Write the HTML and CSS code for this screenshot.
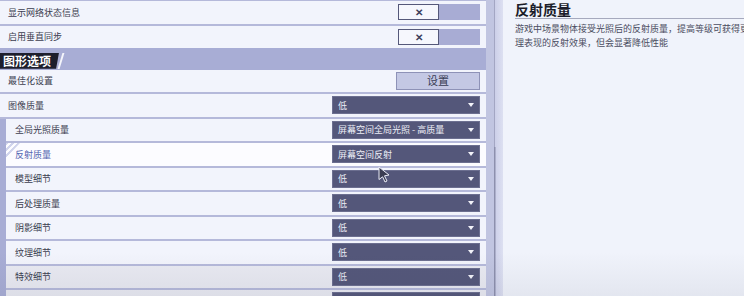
FILE: index.html
```html
<!DOCTYPE html>
<html lang="zh-CN">
<head>
<meta charset="utf-8">
<title>图形选项</title>
<link rel="stylesheet" href="styles.css">
</head>
<body>
<div class="page">
  <div class="left">
    <div class="row">
      <span class="label">显示网络状态信息</span>
      <div class="toggle"><span class="tog-off">✕</span><span class="tog-on"></span></div>
    </div>
    <div class="row">
      <span class="label">启用垂直同步</span>
      <div class="toggle"><span class="tog-off">✕</span><span class="tog-on"></span></div>
    </div>
    <div class="header">
      <div class="tab">图形选项</div>
      <div class="slash"></div>
    </div>
    <div class="row">
      <span class="label">最佳化设置</span>
      <div class="btn">设置</div>
    </div>
    <div class="row">
      <span class="label">图像质量</span>
      <div class="select"><span>低</span><i class="arrow"></i></div>
    </div>
    <div class="group">
      <div class="row sub">
        <span class="label">全局光照质量</span>
        <div class="select"><span>屏幕空间全局光照 - 高质量</span><i class="arrow"></i></div>
      </div>
      <div class="row sub active">
        <span class="label">反射质量</span>
        <div class="select"><span>屏幕空间反射</span><i class="arrow"></i></div>
      </div>
      <div class="row sub">
        <span class="label">模型细节</span>
        <div class="select"><span>低</span><i class="arrow"></i></div>
      </div>
      <div class="row sub">
        <span class="label">后处理质量</span>
        <div class="select"><span>低</span><i class="arrow"></i></div>
      </div>
      <div class="row sub">
        <span class="label">阴影细节</span>
        <div class="select"><span>低</span><i class="arrow"></i></div>
      </div>
      <div class="row sub">
        <span class="label">纹理细节</span>
        <div class="select"><span>低</span><i class="arrow"></i></div>
      </div>
      <div class="row sub dim">
        <span class="label">特效细节</span>
        <div class="select"><span>低</span><i class="arrow"></i></div>
      </div>
      <div class="row sub dim">
        <span class="label"></span>
        <div class="select"></div>
      </div>
    </div>
  </div>
  <div class="scroll"></div>
  <div class="right">
    <h1 class="title">反射质量</h1>
    <p class="desc">游戏中场景物体接受光照后的反射质量，提高等级可获得更好的物<br>理表现的反射效果，但会显著降低性能</p>
  </div>
  <svg class="cursor" width="14" height="18" viewBox="0 0 14 18">
    <path d="M2 1 L12 9 L7.5 9.8 L10 15 L8 16 L5.6 10.8 L2 13.5 Z" fill="#3a3c52" stroke="#e9ebf6" stroke-width="1"/>
  </svg>
  <div class="shade"></div>
</div>
</body>
</html>
```

FILE: styles.css
```css
* { box-sizing: border-box; }
html, body {
  margin: 0;
  padding: 0;
  width: 744px;
  height: 296px;
  overflow: hidden;
  background: #eff2fb;
  font-family: "Noto Sans CJK SC", "Noto Sans", sans-serif;
}
.page {
  position: relative;
  display: flex;
  width: 744px;
  height: 296px;
  overflow: hidden;
}
.left {
  width: 486px;
  flex: none;
  display: flex;
  flex-direction: column;
  gap: 2px;
  padding-top: 1px;
  background: #b5b9da;
}
.row {
  position: relative;
  flex: none;
  height: 22.5px;
  display: flex;
  align-items: center;
  justify-content: space-between;
  padding: 0 6px 0 8px;
  background: #f2f4fc;
}
.label {
  font-size: 9px;
  line-height: 1;
  color: #3b3d4f;
}
.group {
  display: flex;
  flex-direction: column;
  gap: 2px;
  border-left: 6px solid #a8add5;
}
.row.sub { padding-left: 9px; }
.row.active { background: #fcfcff; }
.row.active .label { color: #5264b0; }
.row.active::before {
  content: "";
  position: absolute;
  left: 0;
  top: 0;
  width: 14px;
  height: 15px;
  background: repeating-linear-gradient(135deg, #d0d4ec 0 2px, transparent 2px 4px);
  clip-path: polygon(0 0, 100% 0, 0 100%);
}
.row.dim { background: #e9eaf2; }

.toggle {
  display: flex;
  width: 82px;
  height: 16px;
}
.tog-off {
  width: 41px;
  height: 16px;
  background: #f6f7fd;
  border: 1px solid #55587a;
  display: flex;
  align-items: center;
  justify-content: center;
  font-size: 10px;
  font-weight: bold;
  color: #3c3f5c;
  line-height: 1;
}
.tog-on {
  width: 41px;
  height: 16px;
  background: #a8acd4;
}
.btn {
  width: 84px;
  height: 18px;
  background: #c4c8e4;
  border: 1px solid #8e92b7;
  display: flex;
  align-items: center;
  justify-content: center;
  font-size: 11px;
  color: #3a3d55;
  line-height: 1;
}
.select {
  width: 148px;
  height: 18px;
  background: #54577a;
  border: 1px solid #6c6f90;
  display: flex;
  align-items: center;
  justify-content: space-between;
  padding: 0 5px 0 5px;
  font-size: 9px;
  line-height: 1;
  color: #eceef6;
}
.arrow {
  width: 0;
  height: 0;
  border-left: 3.5px solid transparent;
  border-right: 3.5px solid transparent;
  border-top: 4px solid #f2f3f9;
}
.header {
  position: relative;
  flex: none;
  height: 21.5px;
  margin: -2px 0;
  background: #a8add5;
  display: flex;
  align-items: center;
}
.tab {
  height: 16px;
  width: 59px;
  background: #1d1e2c;
  color: #ffffff;
  font-weight: bold;
  font-size: 12px;
  line-height: 16px;
  padding-left: 3px;
  clip-path: polygon(0 0, 100% 0, 95% 100%, 0 100%);
  margin-top: 4px;
}
.slash {
  width: 1.5px;
  height: 16px;
  margin-top: 4px;
  margin-left: 1px;
  background: #f4f5fb;
  transform: skewX(-17deg);
}
.scroll {
  width: 17px;
  flex: none;
  background:
    linear-gradient(#8d90ad, #8d90ad) 8px 147px / 1.5px 160px no-repeat,
    linear-gradient(90deg, #c1c5e1 0 8px, #a3a6c3 8px 9.5px, #cdd0e9 9.5px, #dde0f1 100%);
}
.right {
  flex: 1;
  min-width: 0;
  padding-left: 12px;
  overflow: hidden;
  background: #f0f3fb;
}
.title {
  margin: 0;
  height: 19px;
  padding-top: 1px;
  font-size: 14px;
  line-height: 16px;
  font-weight: bold;
  color: #1c1d2a;
  border-bottom: 1px solid #a6a9bd;
  white-space: nowrap;
}
.desc {
  margin: 3px 0 0;
  font-size: 9px;
  line-height: 13.5px;
  color: #4a4c60;
  white-space: nowrap;
}
.cursor {
  position: absolute;
  left: 377px;
  top: 166px;
}
.shade {
  position: absolute;
  left: 0;
  right: 0;
  bottom: 0;
  height: 44px;
  pointer-events: none;
  background: linear-gradient(180deg, rgba(60, 64, 90, 0) 0%, rgba(60, 64, 90, 0.07) 100%);
}
```
